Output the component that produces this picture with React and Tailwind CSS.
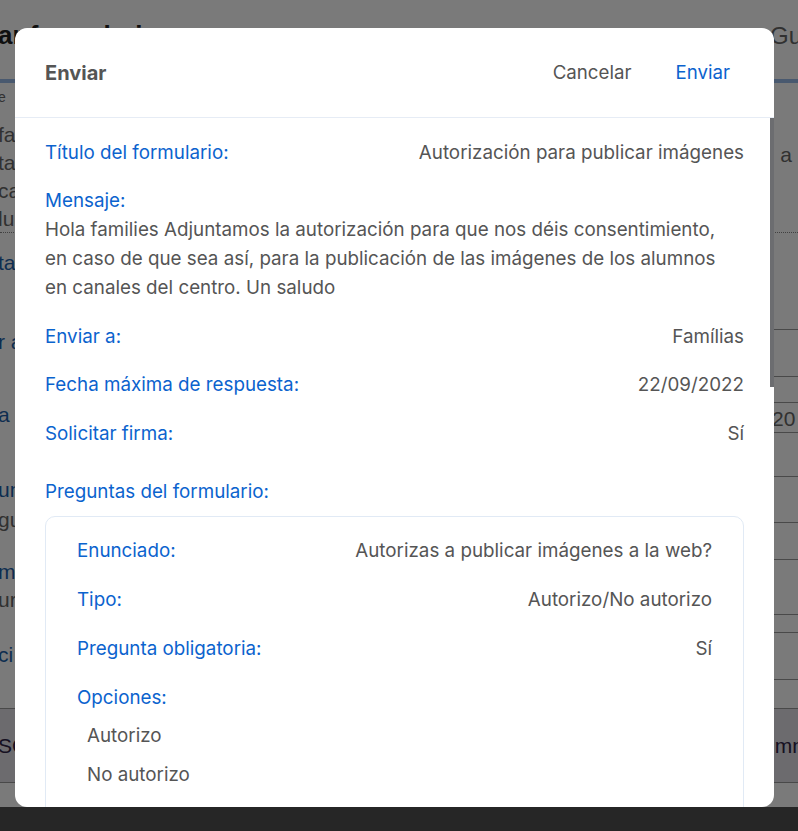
import React from 'react';

const Row = ({ label, value }) => (
  <div className="flex items-start justify-between leading-[29px]">
    <span className="text-[#0b63ce]">{label}</span>
    <span className="text-[#555]">{value}</span>
  </div>
);

const BackgroundPage = () => {
  return (
    <div className="h-[831px] w-full overflow-hidden bg-white font-['Liberation_Sans',sans-serif] text-[#333]">
      {/* header */}
      <header className="flex h-[83px] items-start justify-between border-b-4 border-[#9abbe9]">
        <h1 className="-ml-[2px] mt-[20px] text-[26px] font-bold leading-[30px] text-[#222]">ar formulario</h1>
        <span className="mt-[22px] mr-[-4px] text-[24px] leading-[28px] text-[#666]">Gu</span>
      </header>

      {/* section A */}
      <div className="flex h-[150px] justify-between border-b border-dotted border-[#888]">
        <div className="-ml-[2px] text-[#666]">
          <p className="mt-[6px] text-[14px] leading-[16px]">e</p>
          <div className="mt-[16px] text-[21px] leading-[28px]">
            <p>fa</p>
            <p>ta</p>
            <p>ca</p>
            <p>lu</p>
          </div>
        </div>
        <p className="mr-[6px] mt-[58px] text-[21px] leading-[28px] text-[#666]">a</p>
      </div>

      {/* section B */}
      <div className="flex h-[475px] justify-between">
        <div className="-ml-[2px] text-[21px] leading-[28px]">
          <p className="mt-[16px] text-[#1d5fa8]">ta</p>
          <p className="mt-[51px] text-[#1d5fa8]">r a</p>
          <p className="mt-[45px] text-[#1d5fa8]">a m</p>
          <p className="mt-[47px] text-[#1d5fa8]">unt</p>
          <p className="mt-[2px] text-[#666]">gu</p>
          <p className="mt-[24px] text-[#1d5fa8]">me</p>
          <p className="text-[#666]">ur</p>
          <p className="mt-[27px] text-[#1d5fa8]">ci</p>
        </div>
        <div className="flex w-[28px] flex-col text-[21px] text-[#666]">
          <div className="h-[97px] border-b border-[#999]" />
          <div className="h-[47px] border-b border-[#999]" />
          <div className="h-[26px] border-b border-[#999]" />
          <div className="flex h-[30px] items-end border-b border-[#999] pl-[2px] leading-[26px]">20</div>
          <div className="h-[44px] border-b border-[#999]" />
          <div className="h-[46px] border-b border-[#999]" />
          <div className="h-[37px] border-b border-[#999]" />
          <div className="h-[55px] border-b border-[#999]" />
          <div className="h-[18px] border-b border-[#999]" />
          <div className="h-[47px] border-b border-[#999]" />
        </div>
      </div>

      {/* band */}
      <div className="flex h-[75px] items-center justify-between border-y border-[#999] bg-[#e2dfe6] text-[21px] text-[#2e2446]">
        <span className="-ml-[2px]">SC</span>
        <span className="mr-[-6px]">umn</span>
      </div>
      <div className="h-[24px]" />
      <div className="h-[30px] bg-[#505050]" />
    </div>
  );
};

const App = () => {
  return (
    <div className="relative h-[831px] w-full overflow-hidden">
      <BackgroundPage />
      <div className="absolute inset-0 bg-black/[0.52]" />

      <div className="absolute left-[15px] top-[28px] flex h-[779px] w-[759px] flex-col overflow-hidden rounded-[12px] bg-white font-['Inter',sans-serif] text-[18.8px]">
        {/* header */}
        <div className="flex h-[90px] shrink-0 items-center justify-between border-b border-[#e6ecf5] pl-[30px] pr-[44px]">
          <h2 className="text-[20px] font-bold text-[#555]">Enviar</h2>
          <div className="flex items-center gap-[44px] pt-[1px] text-[18.7px]">
            <button className="text-[#555]">Cancelar</button>
            <button className="text-[#0b63ce]">Enviar</button>
          </div>
        </div>

        {/* body */}
        <div className="relative flex-1 overflow-hidden">
          <div className="absolute right-0 top-0 h-[269px] w-[4px] bg-[#6c6d70]" />
          <div className="flex flex-col gap-[19.5px] px-[30px] pt-[19.5px]">
            <Row label="Título del formulario:" value="Autorización para publicar imágenes" />

            <div className="leading-[29px]">
              <p className="text-[#0b63ce]">Mensaje:</p>
              <p className="text-[#555]">
                Hola families Adjuntamos la autorización para que nos déis consentimiento,
                <br />
                en caso de que sea así, para la publicación de las imágenes de los alumnos
                <br />
                en canales del centro. Un saludo
              </p>
            </div>

            <Row label="Enviar a:" value="Famílias" />
            <Row label="Fecha máxima de respuesta:" value="22/09/2022" />
            <Row label="Solicitar firma:" value="Sí" />

            <div className="mt-[9.5px]">
              <p className="leading-[29px] text-[#0b63ce]">Preguntas del formulario:</p>
              <div className="mt-[10.5px] flex flex-col gap-[20px] rounded-[10px] border border-[#e1eaf5] px-[31px] pb-[30px] pt-[18.5px]">
                <Row label="Enunciado:" value="Autorizas a publicar imágenes a la web?" />
                <Row label="Tipo:" value="Autorizo/No autorizo" />
                <Row label="Pregunta obligatoria:" value="Sí" />
                <div className="leading-[29px]">
                  <p className="text-[#0b63ce]">Opciones:</p>
                  <div className="mt-[9px] flex flex-col gap-[10px] pl-[10px] text-[#555]">
                    <p>Autorizo</p>
                    <p>No autorizo</p>
                  </div>
                </div>
              </div>
            </div>
          </div>
        </div>
      </div>
    </div>
  );
};

export default App;
